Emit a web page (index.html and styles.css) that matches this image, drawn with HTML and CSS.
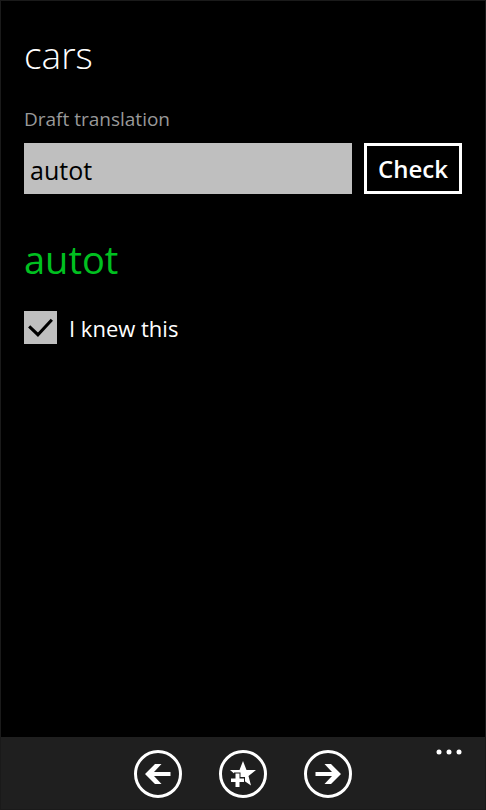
FILE: index.html
```html
<!DOCTYPE html>
<html lang="en">
  <head>
    <meta charset="utf-8" />
    <meta name="viewport" content="width=device-width, initial-scale=1" />
    <title>cars</title>
    <link rel="stylesheet" href="styles.css">
  </head>
  <body>
    <main>
      <h1>cars</h1>
      <form>
        <label class="caption" for="draft">Draft translation</label>
        <div class="entry">
          <input class="draft" id="draft" type="text" value="autot" />
          <button class="check" type="button">Check</button>
        </div>
        <p class="answer">autot</p>
        <div class="known">
          <span class="tick">
            <input id="known" type="checkbox" checked />
            <svg viewBox="0 0 32 32" aria-hidden="true">
              <path d="M5 15 L13.5 23 L27 8.5" />
            </svg>
          </span>
          <label for="known">I knew this</label>
        </div>
      </form>
    </main>

    <footer class="appbar">
      <button class="round" type="button" aria-label="Previous">
        <svg viewBox="0 0 48 48">
          <circle cx="24" cy="24" r="22.5" />
          <path d="M11 24 L21 14 H27.5 L20 22 H36.5 V26 H20 L27.5 34 H21 Z" />
        </svg>
      </button>
      <button class="round" type="button" aria-label="Add to favourites">
        <svg viewBox="0 0 48 48">
          <circle cx="24" cy="24" r="22.5" />
          <path d="M24 11 L27.5 20 H37 L29.5 26 L32 35.5 L24 30 L17 34 L18 26 L11 20 H20.5 Z" />
          <path class="cut" d="M15 22.5 H21.5 V27 H26 V33.5 H21.5 V38 H15 V33.5 H10 V27 H15 Z" />
          <path d="M16.5 23.5 H20.5 V28.5 H25 V32 H20.5 V37 H16.5 V32 H12 V28.5 H16.5 Z" />
        </svg>
      </button>
      <button class="round" type="button" aria-label="Next">
        <svg viewBox="0 0 48 48">
          <circle cx="24" cy="24" r="22.5" />
          <path d="M37 24 L27 14 H20.5 L28 22 H11.5 V26 H28 L20.5 34 H27 Z" />
        </svg>
      </button>
      <button class="more" type="button" aria-label="More">
        <svg viewBox="0 0 26 6">
          <circle cx="3" cy="3" r="2.5" />
          <circle cx="13" cy="3" r="2.5" />
          <circle cx="23" cy="3" r="2.5" />
        </svg>
      </button>
    </footer>
  </body>
</html>
```

FILE: styles.css
```css
* {
  box-sizing: border-box;
  margin: 0;
  padding: 0;
}

body {
  display: flex;
  flex-direction: column;
  min-height: 100vh;
  border: 1px solid #1a1a1a;
  background: #000;
  color: #fff;
  font-family: "Open Sans", "Noto Sans", sans-serif;
  font-size: 22px;
  line-height: 32px;
}

main {
  flex: 1;
  padding: 30px 23px;
}

h1,
.answer {
  font-size: 38px;
  line-height: 48px;
}

h1 {
  font-size: 37px;
  font-weight: 300;
}

.caption {
  display: block;
  margin-top: 24px;
  color: #999;
  font-size: 19px;
}

.entry {
  display: flex;
  gap: 12px;
  margin-top: 8px;
}

.draft,
.check {
  height: 51px;
  border: 0;
  font: inherit;
}

.draft {
  flex: 1;
  min-width: 0;
  padding: 2px 6px 0;
  background: #bfbfbf;
  color: #000;
  font-size: 25px;
}

.check {
  width: 98px;
  border: 3px solid #fff;
  background: none;
  color: #fff;
  font-size: 24px;
  font-weight: 600;
}

.answer {
  margin-top: 41px;
  color: #00c020;
}

.known {
  display: flex;
  align-items: center;
  gap: 12px;
  margin-top: 28px;
}

.tick {
  display: grid;
  width: 33px;
  height: 33px;
}

.tick input,
.tick svg {
  grid-area: 1 / 1;
  width: 100%;
  height: 100%;
}

.tick input {
  appearance: none;
  background: #bfbfbf;
}

.tick svg {
  visibility: hidden;
  fill: none;
  stroke: #000;
  stroke-width: 3;
  pointer-events: none;
}

.tick input:checked + svg {
  visibility: visible;
}

.appbar {
  position: relative;
  display: flex;
  justify-content: center;
  gap: 37px;
  padding: 13px 0 11px;
  background: #1f1f1f;
}

.round,
.more {
  border: 0;
  background: none;
}

.appbar svg {
  display: block;
  width: 100%;
  fill: #fff;
}

.round {
  width: 48px;
  height: 48px;
}

.round circle {
  fill: none;
  stroke: #fff;
  stroke-width: 3;
}

.appbar .cut {
  fill: #1f1f1f;
}

/* the menu dots sit in the corner, clear of the centred buttons */
.more {
  position: absolute;
  top: 12px;
  right: 23px;
  width: 26px;
}
```
